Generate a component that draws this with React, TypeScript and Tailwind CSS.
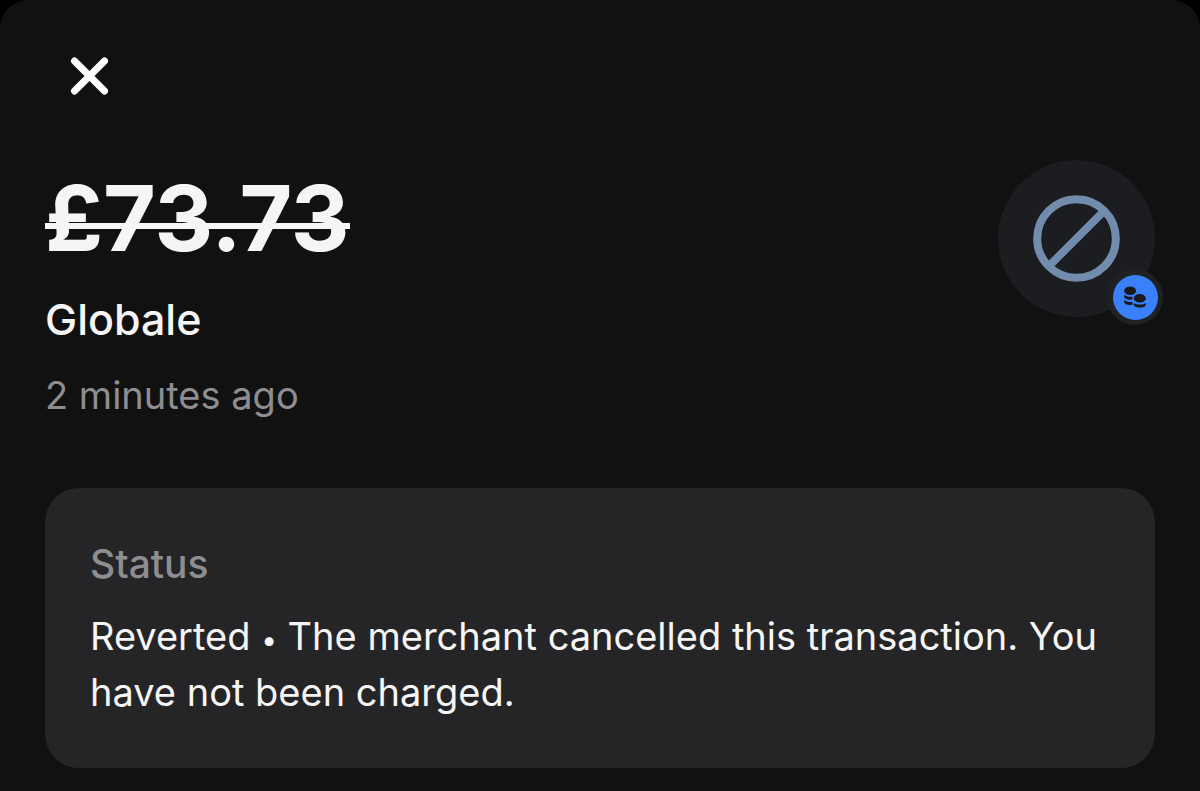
function CloseIcon() {
  return (
    <svg viewBox="0 0 40 40" className="size-10" fill="none" stroke="white" strokeWidth="7" strokeLinecap="round" aria-hidden="true">
      <path d="M5.5 5 35.5 35M35.5 5 5.5 35" />
    </svg>
  );
}

function BlockedIcon() {
  return (
    <svg viewBox="0 0 87 87" className="size-[87px]" fill="none" stroke="#728cae" strokeWidth="8" aria-hidden="true">
      <circle cx="43.5" cy="43.5" r="39.3" />
      <path d="M16 71 71 16" />
    </svg>
  );
}

function CoinsIcon() {
  return (
    <svg viewBox="0 0 24 24" className="size-6" fill="#17191d" aria-hidden="true">
      <ellipse cx="7.1" cy="5.7" rx="6" ry="4.3" />
      <path d="M1.2 9.8c1.8 1.6 4.6 2.3 8.2 1.9v2.9c-4.5.5-8.2-.8-8.2-3.1z" />
      <path d="M1.2 15c1.8 1.6 4.6 2.3 8.2 1.9v3c-4.5.5-8.2-.8-8.2-3.2z" />
      <ellipse cx="16.8" cy="13.3" rx="6" ry="4.3" />
      <path d="M10.8 17.9c3.2 2.1 8.8 2.1 12 0v1.6c0 4.2-12 4.2-12 0z" />
    </svg>
  );
}

export default function App() {
  return (
    <div className="min-h-screen bg-black font-['Inter','Liberation_Sans',sans-serif]">
      <main className="min-h-screen rounded-t-[28px] bg-[#111111] px-[45px] pt-14 pb-6 text-[#f5f5f5]">
        <button type="button" aria-label="Close" className="ml-6 block">
          <CloseIcon />
        </button>

        <header className="mt-16 flex items-start justify-between">
          <div>
            <h1 className="pt-0.5 text-[91px] leading-[112px] font-bold">
              <s className="relative inline-block no-underline after:absolute after:inset-x-0 after:top-[61px] after:h-[6px] after:bg-[#f5f5f5]">
                £73.73
              </s>
            </h1>
            <p className="mt-[17px] text-[43px] leading-[56px] font-medium">Globale</p>
            <p className="mt-[22px] text-[38px] leading-[52px] text-[#8e8e91]">2 minutes ago</p>
          </div>
          <div className="relative flex size-[157px] items-center justify-center rounded-full bg-[#1c1d20]">
            <BlockedIcon />
            <div className="absolute -right-2 -bottom-2 flex size-14 items-center justify-center rounded-full bg-[#202124]">
              <div className="flex size-[45px] items-center justify-center rounded-full bg-[#3a80fb]">
                <CoinsIcon />
              </div>
            </div>
          </div>
        </header>

        <section className="mt-[67px] rounded-[34px] bg-[#252527] px-[45px] py-12">
          <h2 className="text-[39px] leading-[56px] font-medium text-[#8e8e91]">Status</h2>
          <p className="mt-4 text-[38px] leading-[56px]">
            Reverted <span className="text-[28px] leading-none">•</span> The merchant cancelled this transaction. You
            have not been charged.
          </p>
        </section>
      </main>
    </div>
  );
}
